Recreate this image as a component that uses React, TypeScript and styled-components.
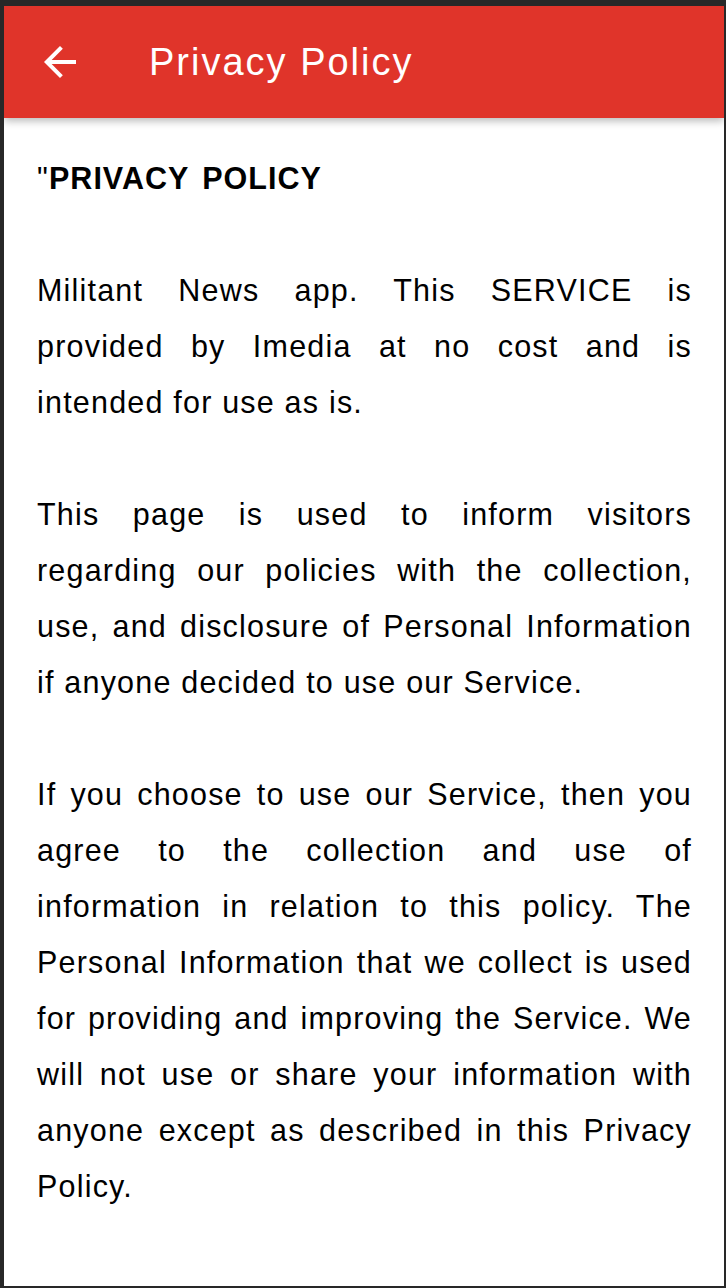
import { createGlobalStyle, styled } from "styled-components";

const GlobalStyle = createGlobalStyle`
  html, body {
    margin: 0;
    padding: 0;
    background: #282828;
  }
`;

const App = () => {
  return (
    <>
      <GlobalStyle />
      <Frame>
        <Screen>
          <Header>
            <BackButton aria-label="back">
              <svg width="48" height="48" viewBox="0 0 24 24">
                <path
                  fill="#fff"
                  d="M20 11H7.83l5.59-5.59L12 4l-8 8 8 8 1.41-1.41L7.83 13H20v-2z"
                />
              </svg>
            </BackButton>
            <Title>Privacy Policy</Title>
          </Header>

          <Content>
            <p>
              "<strong>PRIVACY POLICY</strong>
            </p>
            <p>
              Militant News app. This SERVICE is provided by Imedia at no cost
              and is intended for use as is.
            </p>
            <p>
              This page is used to inform visitors regarding our policies with
              the collection, use, and disclosure of Personal Information if
              anyone decided to use our Service.
            </p>
            <p>
              If you choose to use our Service, then you agree to the collection
              and use of information in relation to this policy. The Personal
              Information that we collect is used for providing and improving
              the Service. We will not use or share your information with anyone
              except as described in this Privacy Policy.
            </p>
          </Content>
        </Screen>
      </Frame>
    </>
  );
};

export default App;

const Frame = styled.div`
  width: 726px;
  height: 1288px;
  box-sizing: border-box;
  padding: 6px 2px 2px 4px;
  background: #282828;
  display: flex;
`;

const Screen = styled.div`
  flex: 1;
  display: flex;
  flex-direction: column;
  background: #fff;
  overflow: hidden;
`;

const Header = styled.header`
  height: 112px;
  flex-shrink: 0;
  background: #e0342a;
  display: flex;
  align-items: center;
  gap: 65px;
  padding-left: 32px;
  box-shadow: 0 3px 8px rgba(0, 0, 0, 0.28);
  position: relative;
  z-index: 1;
`;

const BackButton = styled.div`
  width: 48px;
  height: 48px;
  display: flex;
`;

const Title = styled.h1`
  margin: 0;
  color: #fff;
  font-family: "Liberation Sans", Arial, sans-serif;
  font-size: 38px;
  font-weight: 400;
  letter-spacing: 2px;
`;

const Content = styled.div`
  padding: 32px 32px 0 33px;
  font-family: "Liberation Sans", Arial, sans-serif;
  font-size: 30.5px;
  letter-spacing: 1.2px;
  line-height: 56px;
  color: #000;
  text-align: justify;

  p {
    margin: 0 0 56px;
  }

  strong {
    font-weight: 700;
    letter-spacing: 1px;
    word-spacing: 4px;
  }
`;
